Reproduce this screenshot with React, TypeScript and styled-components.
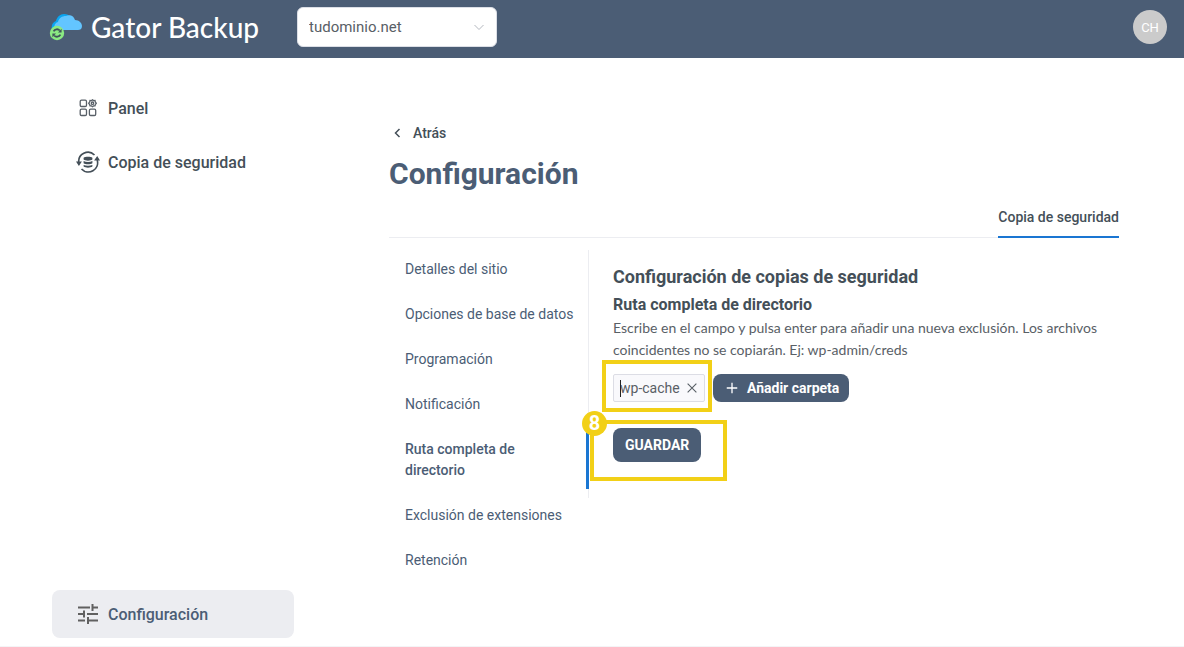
import React from 'react';
import styled, { createGlobalStyle, css } from 'styled-components';

const color = {
  slate: '#4b5d75',
  ink: '#444f58',
  text: '#596066',
  line: '#ecedf1',
  blue: '#1a76d2',
  mark: '#f2d017',
};

const GlobalStyle = createGlobalStyle`
  *, *::before, *::after { box-sizing: border-box; }
  body { margin: 0; background: #fff; color: ${color.ink}; font-family: Roboto, "Liberation Sans", sans-serif; font-size: 14px; }
  h1, h2, h3, p, ul { margin: 0; padding: 0; }
  button, select { font-family: inherit; }
  a { color: inherit; text-decoration: none; }
`;

const Page = styled.div`
  min-height: 100vh;
  display: flex;
  flex-direction: column;
`;

const Header = styled.header`
  display: flex;
  align-items: center;
  height: 58px;
  padding: 0 17px 4px 49px;
  background: ${color.slate};
`;

const Brand = styled.a`
  display: flex;
  align-items: center;
  gap: 8px;
  width: 248px;
  color: #fff;
  font-family: Lato, sans-serif;
  font-size: 28px;
  font-weight: 500;
  line-height: 32px;
  white-space: nowrap;
`;

const SelectWrap = styled.label`
  position: relative;
  display: flex;
  align-items: center;

  svg { position: absolute; right: 12px; pointer-events: none; }
`;

const DomainSelect = styled.select`
  appearance: none;
  width: 200px;
  height: 40px;
  padding: 0 32px 0 11px;
  border: 1px solid #dcdfe6;
  border-radius: 6px;
  background: #fff;
  color: ${color.text};
  font-size: 15px;
`;

const Avatar = styled.button`
  margin-left: auto;
  width: 34px;
  height: 34px;
  padding: 0;
  border: 0;
  border-radius: 50%;
  background: #cbcbcb;
  color: #fff;
  font-size: 13px;
`;

const Body = styled.div`
  flex: 1;
  display: flex;
  gap: 95px;
  padding: 26px 65px 8px 52px;
  border-bottom: 1px solid #f4f4f6;
`;

const Sidebar = styled.nav`
  display: flex;
  flex-direction: column;
  gap: 6px;
  flex: 0 0 242px;
`;

const SideLink = styled.a<{ $active?: boolean }>`
  display: flex;
  align-items: center;
  gap: 8px;
  height: 48px;
  padding: 0 24px;
  border-radius: 8px;
  font-size: 16px;
  font-weight: 500;

  ${(p) => p.$active && css`
    margin-top: auto;
    background: ${color.line};
    color: ${color.slate};
  `}
`;

const Main = styled.main`
  flex: 1;
  min-width: 0;
  padding-top: 39px;
`;

const BackLink = styled.a`
  display: inline-flex;
  align-items: center;
  gap: 8px;
  font-weight: 500;
  line-height: 20px;
`;

const Title = styled.h1`
  margin-top: 12px;
  color: ${color.slate};
  font-size: 30px;
  line-height: 36px;
  font-weight: 700;
`;

const Tabs = styled.div`
  display: flex;
  justify-content: flex-end;
  margin-top: 6px;
  border-bottom: 1px solid ${color.line};
`;

const Tab = styled.a`
  height: 40px;
  margin-bottom: -1px;
  padding-top: 9px;
  border-bottom: 2px solid ${color.blue};
  font-weight: 500;
  line-height: 20px;
`;

const Columns = styled.div`
  display: flex;
  align-items: flex-start;
  padding-top: 12px;
`;

const Menu = styled.ul`
  position: relative;
  display: flex;
  flex-direction: column;
  gap: 8px;
  flex: 0 0 200px;
  margin: 1px -1px 0 0;
  list-style: none;
`;

const MenuLink = styled.a<{ $active?: boolean }>`
  display: block;
  padding: 8px 8px 8px 16px;
  border-right: 3px solid ${(p) => (p.$active ? color.blue : 'transparent')};
  color: ${color.slate};
  font-weight: ${(p) => (p.$active ? 500 : 400)};
  line-height: 21px;
`;

const Panel = styled.section`
  flex: 1;
  min-width: 0;
  height: 248px;
  padding: 15px 0 0 24px;
  border-left: 1px solid ${color.line};
`;

const PanelTitle = styled.h2`
  font-size: 18px;
  line-height: 24px;
`;

const FieldTitle = styled.h3`
  margin-top: 4px;
  font-size: 16px;
  line-height: 24px;
`;

const Hint = styled.p`
  color: ${color.text};
  font-family: Lato, sans-serif;
  font-size: 14px;
  line-height: 22px;
`;

const Row = styled.div`
  display: flex;
  gap: 8px;
  margin-top: 13px;
`;

const Tag = styled.span`
  position: relative;
  display: flex;
  align-items: center;
  gap: 5px;
  width: 92px;
  height: 28px;
  padding: 0 7px 0 6px;
  border: 1px solid #dcdde5;
  border-radius: 2px;
  background: #f9f9fc;
  color: ${color.text};
  white-space: nowrap;
  font-size: 14px;
`;

const Caret = styled.span`
  position: absolute;
  left: 6px;
  width: 1px;
  height: 17px;
  background: #222;
`;

const RemoveButton = styled.button`
  display: flex;
  margin-left: auto;
  padding: 0;
  border: 0;
  background: none;
  color: ${color.text};
`;

const SolidButton = styled.button<{ $large?: boolean }>`
  display: flex;
  align-items: center;
  justify-content: center;
  gap: 8px;
  height: ${(p) => (p.$large ? 34 : 28)}px;
  padding: 0 ${(p) => (p.$large ? 12 : 10)}px 0 12px;
  border: 0;
  border-radius: 8px;
  background: ${color.slate};
  color: #fff;
  font-size: 14px;
  font-weight: 700;
  white-space: nowrap;
`;

const SaveArea = styled.div`
  position: relative;
  display: inline-flex;
  margin-top: 26px;
`;

const Mark = styled.span<{ $inset: string }>`
  position: absolute;
  inset: ${(p) => p.$inset};
  border: 4px solid ${color.mark};
  pointer-events: none;
`;

const Step = styled.span`
  position: absolute;
  left: -31px;
  top: -17px;
  width: 25px;
  height: 25px;
  border-radius: 50%;
  background: ${color.mark};
  color: #fff;
  font-size: 20px;
  font-weight: 700;
  line-height: 25px;
  text-align: center;
`;

const LogoMark = () => (
  <svg width="34" height="28" viewBox="0 0 34 28" aria-hidden="true">
    <path d="M3 17C2 12 4 9 7 8C8 4 11 1 15 1C18 1 20 2 22 4L12 17Z" fill="#0ba5f0" />
    <path d="M8 17C4 15 5 10 9 9C10 5 13 3 17 3C19 2 24 1 26 7C30 7 33 10 33 13C33 16 31 17 29 17Z" fill="#63c5ff" />
    <circle cx="8" cy="20" r="7.2" fill="#8bea83" />
    <path d="M4.600 18.400A3.800 3.800 0 0 1 10.800 17.500M11.400 21.600A3.800 3.800 0 0 1 5.200 22.500" fill="none" stroke="#40545a" strokeWidth="1.800" />
    <path d="M12.600 15.800V19.400H9ZM3.400 24.200V20.600H7Z" fill="#40545a" />
  </svg>
);

const PanelIcon = () => (
  <svg width="24" height="24" viewBox="0 0 24 24" fill="none" stroke="#596068" strokeWidth="1.300" aria-hidden="true">
    <rect x="4.200" y="4.200" width="6.300" height="6.300" rx="1.300" />
    <rect x="4.200" y="13.200" width="6.300" height="6.300" rx="1.300" />
    <rect x="13.400" y="13.200" width="6.300" height="6.300" rx="1.300" />
    <path d="M16.500 3.800L17.500 4.600L19 4.500L19.300 5.900L20.300 7.200L19.300 8.500L19 9.900L17.500 9.900L16.500 10.700L15.500 9.900L14 9.900L13.700 8.500L12.700 7.200L13.700 5.900L14 4.500L15.500 4.600Z" />
    <circle cx="16.500" cy="7.200" r="1.200" />
  </svg>
);

const BackupIcon = () => (
  <svg width="24" height="24" viewBox="0 0 24 24" fill="none" stroke="#444f58" strokeWidth="1.700" aria-hidden="true">
    <path d="M18.500 5A9.300 9.300 0 0 0 2.800 13M5.500 19A9.300 9.300 0 0 0 21.200 10" />
    <path d="M0 11.500L2.900 16L5.900 11.500ZM18.100 10.500L21.200 6L24 10.500Z" fill="#444f58" stroke="none" />
    <path d="M7.600 7.800V9.500C9 11 15 11 16.400 9.500V7.800C15 6.500 9 6.500 7.600 7.800ZM7.600 11.100C10 12.400 14 12.400 16.400 11.100V13.300C14.500 14.600 9.500 14.600 7.600 13.300ZM7.600 14.900C10 16 14 16 16.400 14.900V16.600C14.500 18 9.500 18 7.600 16.600Z" fill="#444f58" stroke="none" />
  </svg>
);

const TuneIcon = () => (
  <svg width="24" height="24" viewBox="0 0 24 24" fill="none" stroke="#606060" strokeWidth="2" aria-hidden="true">
    <path d="M2 5.500H14M17 5.500H22M16.500 2V9M2 12H7M11 12H22M8 8.500V15.500M2 18.500H9M12 18.500H22M12 15V22" />
  </svg>
);

const StrokeIcon = ({ d, size, width = 1 }: { d: string; size: number; width?: number }) => (
  <svg width={size} height={size} viewBox="0 0 16 16" fill="none" stroke="currentColor" strokeWidth={width} aria-hidden="true">
    <path d={d} />
  </svg>
);

const sections = [
  'Detalles del sitio',
  'Opciones de base de datos',
  'Programación',
  'Notificación',
  'Ruta completa de directorio',
  'Exclusión de extensiones',
  'Retención',
];

export default function App() {
  return (
    <>
      <GlobalStyle />
      <Page>
        <Header>
          <Brand href="#"><LogoMark />Gator Backup</Brand>
          <SelectWrap>
            <DomainSelect aria-label="Dominio" defaultValue="tudominio.net">
              <option>tudominio.net</option>
            </DomainSelect>
            <svg width="12" height="8" viewBox="0 0 12 8" fill="none" stroke="#b4b8bf" aria-hidden="true"><path d="M1.500 2L6 6.500L10.500 2" /></svg>
          </SelectWrap>
          <Avatar>CH</Avatar>
        </Header>
        <Body>
          <Sidebar>
            <SideLink href="#"><PanelIcon />Panel</SideLink>
            <SideLink href="#"><BackupIcon />Copia de seguridad</SideLink>
            <SideLink href="#" $active><TuneIcon />Configuración</SideLink>
          </Sidebar>
          <Main>
            <BackLink href="#"><StrokeIcon size={16} width={1.5} d="M10.500 4L6.500 8L10.500 12" />Atrás</BackLink>
            <Title>Configuración</Title>
            <Tabs><Tab href="#">Copia de seguridad</Tab></Tabs>
            <Columns>
              <Menu>
                {sections.map((name, i) => (
                  <li key={name}><MenuLink href="#" $active={i === 4}>{name}</MenuLink></li>
                ))}
              </Menu>
              <Panel>
                <PanelTitle>Configuración de copias de seguridad</PanelTitle>
                <FieldTitle>Ruta completa de directorio</FieldTitle>
                <Hint>
                  Escribe en el campo y pulsa enter para añadir una nueva exclusión. Los archivos<br />
                  coincidentes no se copiarán. Ej: wp-admin/creds
                </Hint>
                <Row>
                  <Tag>
                    <Caret />wp-cache
                    <RemoveButton aria-label="Quitar"><StrokeIcon size={14} width={1.3} d="M3 3L13 13M13 3L3 13" /></RemoveButton>
                    <Mark $inset="-15px -8px -11px -12px" />
                  </Tag>
                  <SolidButton><StrokeIcon size={14} width={1.5} d="M8 2V14M2 8H14" />Añadir carpeta</SolidButton>
                </Row>
                <SaveArea>
                  <SolidButton $large>GUARDAR</SolidButton>
                  <Mark $inset="-8px -26px -19px -23px" />
                  <Step>8</Step>
                </SaveArea>
              </Panel>
            </Columns>
          </Main>
        </Body>
      </Page>
    </>
  );
}
